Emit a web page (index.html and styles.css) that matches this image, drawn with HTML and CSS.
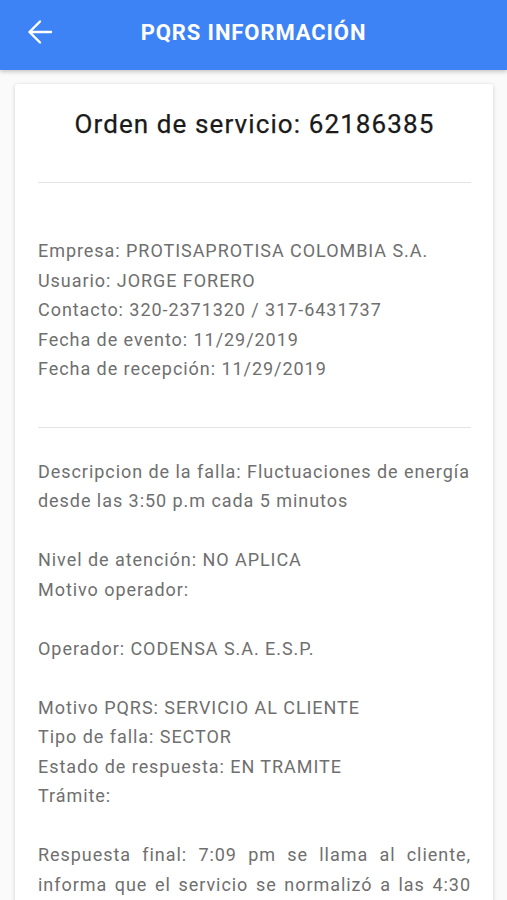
FILE: index.html
```html
<!DOCTYPE html>
<html lang="es">
<head>
    <meta charset="UTF-8">
    <meta name="viewport" content="width=device-width, initial-scale=1.0">
    <title>PQRS Información</title>
    <link rel="stylesheet" href="styles.css">
</head>
<body>
    <header class="app-bar">
        <button class="back-btn" aria-label="Volver">
            <svg width="28" height="28" viewBox="0 0 28 28">
                <path d="M25 14H3.5M14 3.5L3.5 14 14 24.5" fill="none" stroke="#fff" stroke-width="2.4" stroke-linecap="round" stroke-linejoin="round"/>
            </svg>
        </button>
        <h1 class="app-title">PQRS INFORMACIÓN</h1>
    </header>

    <main class="content">
        <div class="card">
            <h2 class="card-title">Orden de servicio: 62186385</h2>
            <hr class="divider">
            <div class="section section-first">
                <p>Empresa: PROTISAPROTISA COLOMBIA S.A.<br>
                Usuario: JORGE FORERO<br>
                Contacto: 320-2371320 / 317-6431737<br>
                Fecha de evento: 11/29/2019<br>
                Fecha de recepción: 11/29/2019</p>
            </div>
            <hr class="divider">
            <div class="section">
                <p>Descripcion de la falla: Fluctuaciones de energía desde las 3:50 p.m cada 5 minutos</p>
                <p>Nivel de atención: NO APLICA<br>
                Motivo operador: </p>
                <p>Operador: CODENSA S.A. E.S.P.</p>
                <p>Motivo PQRS: SERVICIO AL CLIENTE<br>
                Tipo de falla: SECTOR<br>
                Estado de respuesta: EN TRAMITE<br>
                Trámite: </p>
                <p class="justify">Respuesta final: 7:09 pm se llama al cliente, informa que el servicio se normalizó a las 4:30 pm, se finaliza la solicitud.</p>
            </div>
        </div>
    </main>
</body>
</html>
```

FILE: styles.css
```css
body {
    margin: 0;
    background-color: #fafafa;
    font-family: Roboto, "Noto Sans", Arial, sans-serif;
    overflow: hidden;
}

.app-bar {
    display: flex;
    align-items: center;
    box-sizing: border-box;
    height: 70px;
    padding-bottom: 6px;
    background-color: #3e83f6;
    box-shadow: 0 2px 4px rgba(0, 0, 0, 0.2);
    position: relative;
    z-index: 1;
}

.back-btn {
    display: flex;
    align-items: center;
    justify-content: center;
    width: 48px;
    height: 48px;
    margin-left: 16px;
    padding: 0;
    border: none;
    background: none;
    cursor: pointer;
}

.back-btn svg {
    width: 28px;
    height: 28px;
}

.app-title {
    flex: 1;
    margin: 0 64px 0 0;
    text-align: center;
    color: #fff;
    font-size: 22px;
    font-weight: 700;
    letter-spacing: 0.9px;
}

.content {
    padding: 14px 14px 0 15px;
}

.card {
    background-color: #fff;
    border-radius: 3px;
    box-shadow: 0 1px 4px rgba(0, 0, 0, 0.18);
    padding: 20px 22px 20px 23px;
}

.card-title {
    margin: 0;
    padding: 4px 0 0;
    text-align: center;
    font-size: 26px;
    font-weight: 400;
    letter-spacing: 1.1px;
    color: #1a1a1a;
    line-height: 32px;
    -webkit-text-stroke: 0.25px #1a1a1a;
}

.divider {
    border: none;
    border-top: 1px solid #e4e4e4;
    margin: 42px 0 0;
}

.section {
    padding: 29px 0 0;
    color: #6f6f6f;
    font-size: 18px;
    letter-spacing: 0.95px;
    line-height: 29.5px;
}

.section-first {
    padding-top: 53px;
    padding-bottom: 14px;
}

.section-first + .divider {
    margin-top: 29px;
}

.section p {
    margin: 0 0 29.5px;
}

.section-first p {
    margin: 0;
}

.justify {
    text-align: justify;
}
```
